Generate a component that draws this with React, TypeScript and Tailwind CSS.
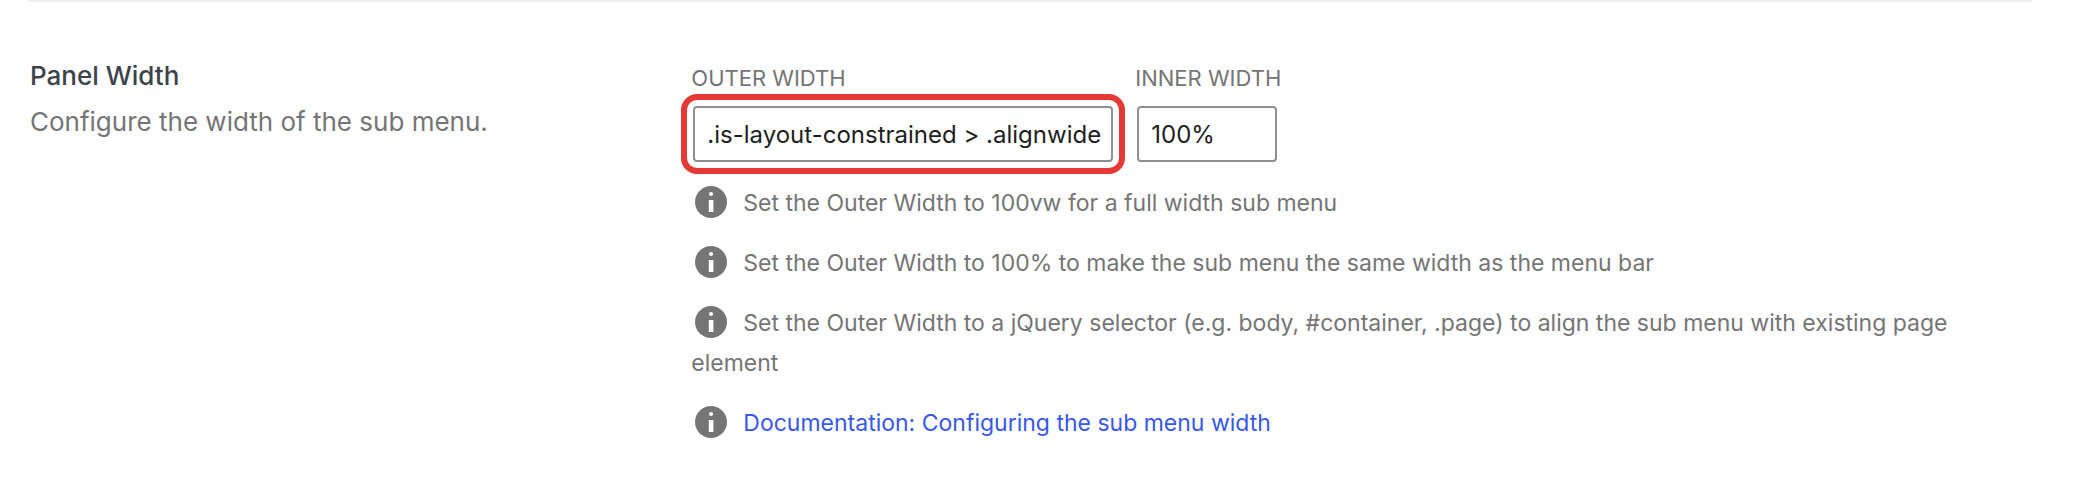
import type { ReactNode } from "react";

function InfoIcon() {
  return (
    <svg viewBox="0 0 32 32" className="-mt-0.5 mr-4 mb-1 ml-1 inline-block size-8 align-middle" aria-hidden="true">
      <circle cx="16" cy="16" r="16" fill="#757575" />
      <circle cx="16" cy="8" r="2.1" fill="#fff" />
      <rect x="13.8" y="14" width="4.6" height="12" fill="#fff" />
    </svg>
  );
}

function Hint({ children }: { children: ReactNode }) {
  return (
    <li>
      <InfoIcon />
      {children}
    </li>
  );
}

type FieldProps = {
  id: string;
  label: string;
  value: string;
  className: string;
};

function Field({ id, label, value, className }: FieldProps) {
  return (
    <div className="flex flex-col">
      <label htmlFor={id} className="text-[22px] leading-7 uppercase">
        {label}
      </label>
      <input
        id={id}
        type="text"
        defaultValue={value}
        className={
          "mt-3.5 ml-0.5 h-14 rounded border-2 border-[#8f8f8f] bg-white pr-2 pl-3 text-2xl text-[#1e1e1e] " + className
        }
      />
    </div>
  );
}

export default function App() {
  return (
    <main className="bg-white pr-12 pl-7 font-['Inter',sans-serif] text-[#757575]">
      <section className="grid grid-cols-[33%_1fr] border-t-2 border-[#eeeeee] pt-[62px] pb-14">
        <div className="pl-0.5 text-[26px]">
          <h2 className="leading-6 font-medium text-[#3c434a]">Panel Width</h2>
          <p className="mt-3.5 leading-10">Configure the width of the sub menu.</p>
        </div>
        <div className="pl-0.5">
          <div className="flex gap-[22px]">
            <Field
              id="outer-width"
              label="Outer Width"
              value=".is-layout-constrained > .alignwide"
              className="w-[420px] outline-6 outline-offset-6 outline-[#e53935]"
            />
            <Field id="inner-width" label="Inner Width" value="100%" className="w-[140px]" />
          </div>
          <ul className="mt-[21px] flex flex-col gap-5 text-[23px] leading-10">
            <Hint>Set the Outer Width to 100vw for a full width sub menu</Hint>
            <Hint>Set the Outer Width to 100% to make the sub menu the same width as the menu bar</Hint>
            <Hint>
              Set the Outer Width to a jQuery selector (e.g. body, #container, .page) to align the sub menu with
              existing page element
            </Hint>
            <Hint>
              <a href="#submenu-width" className="text-[#3858e9]">
                Documentation: Configuring the sub menu width
              </a>
            </Hint>
          </ul>
        </div>
      </section>
    </main>
  );
}
